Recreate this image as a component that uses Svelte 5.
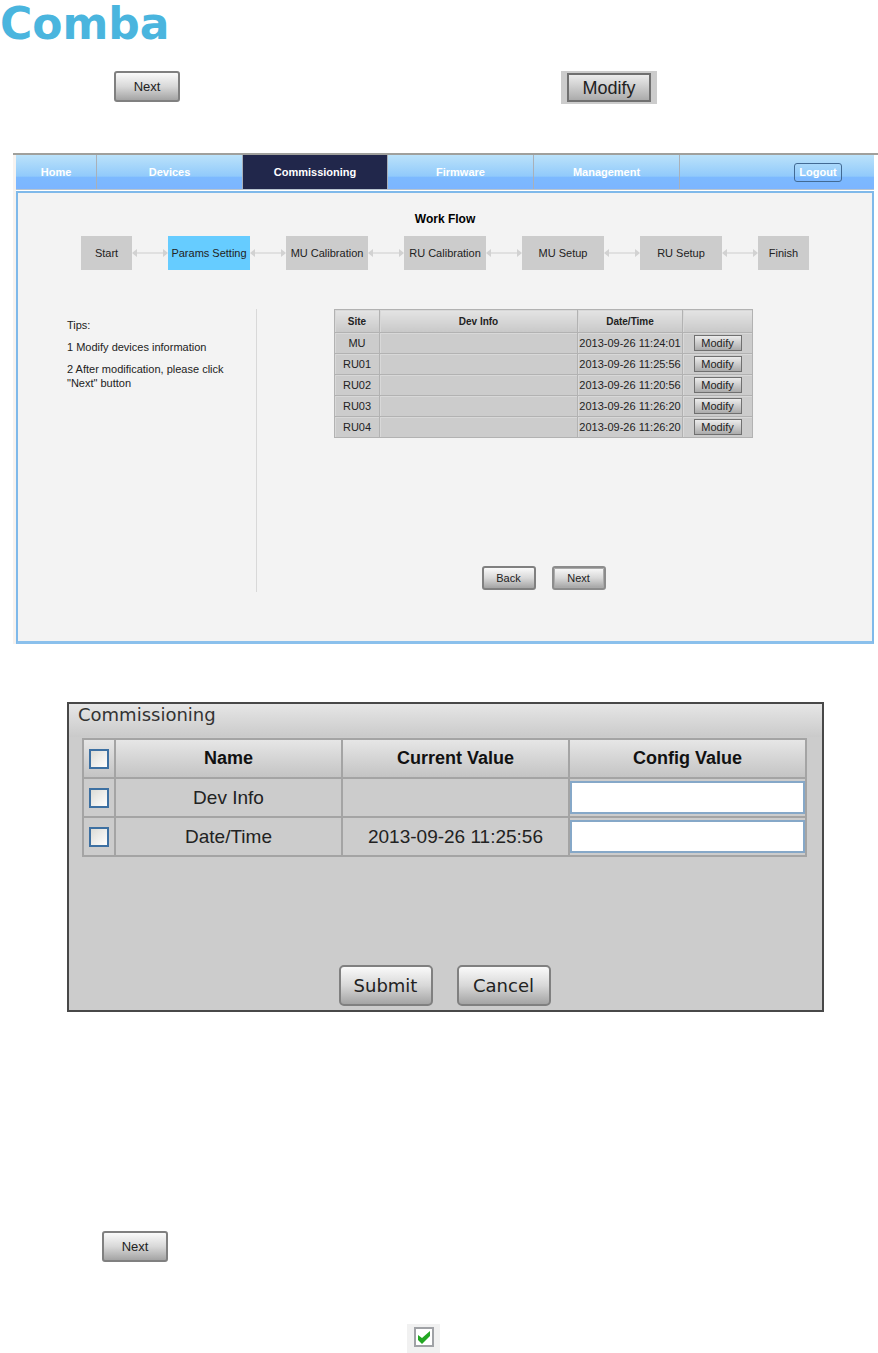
<script lang="ts">
  type Device = { site: string; info: string; time: string };
  type Param = { name: string; current: string; checked: boolean; config: string };

  const tabs = ['Home', 'Devices', 'Commissioning', 'Firmware', 'Management'];
  let activeTab = $state('Commissioning');

  const steps = [
    { label: 'Start', small: true },
    { label: 'Params Setting' },
    { label: 'MU Calibration' },
    { label: 'RU Calibration' },
    { label: 'MU Setup' },
    { label: 'RU Setup' },
    { label: 'Finish', small: true },
  ];
  let activeStep = $state(1);

  const devices: Device[] = [
    { site: 'MU', info: '', time: '2013-09-26 11:24:01' },
    { site: 'RU01', info: '', time: '2013-09-26 11:25:56' },
    { site: 'RU02', info: '', time: '2013-09-26 11:20:56' },
    { site: 'RU03', info: '', time: '2013-09-26 11:26:20' },
    { site: 'RU04', info: '', time: '2013-09-26 11:26:20' },
  ];

  let params: Param[] = $state([
    { name: 'Dev Info', current: '', checked: false, config: '' },
    { name: 'Date/Time', current: '2013-09-26 11:25:56', checked: false, config: '' },
  ]);
  let confirmed = $state(true);

  function toggleAll(e: Event) {
    const on = (e.currentTarget as HTMLInputElement).checked;
    params.forEach((p) => (p.checked = on));
  }

  function move(delta: number) {
    activeStep = Math.min(steps.length - 1, Math.max(0, activeStep + delta));
  }
</script>

<div class="page">
  <header class="logo">Comba</header>

  <div class="samples">
    <button class="btn sample-next" onclick={() => move(1)}>Next</button>
    <span class="modify-wrap"><button class="modify large">Modify</button></span>
  </div>

  <section class="app">
    <nav>
      {#each tabs as tab}
        <a href="#{tab.toLowerCase()}" class:active={tab === activeTab} onclick={() => (activeTab = tab)}>{tab}</a>
      {/each}
      <div class="nav-end"><button class="logout">Logout</button></div>
    </nav>

    <main>
      <h2>Work Flow</h2>
      <div class="flow">
        {#each steps as step, i}
          {#if i > 0}
            <svg class="arrow" viewBox="0 0 36 8" aria-hidden="true">
              <path d="M4 4H32" stroke="#dadada" stroke-width="1.5" />
              <path d="M0 4L5 0V8ZM36 4L31 0V8Z" fill="#d2d2d2" />
            </svg>
          {/if}
          <div class="step" class:small={step.small} class:current={i === activeStep}>{step.label}</div>
        {/each}
      </div>

      <div class="body">
        <aside>
          <p>Tips:</p>
          <p>1 Modify devices information</p>
          <p>2 After modification, please click "Next" button</p>
        </aside>
        <div class="work">
          <table class="devices">
            <colgroup><col class="c-site" /><col /><col class="c-time" /><col class="c-act" /></colgroup>
            <thead>
              <tr><th>Site</th><th>Dev Info</th><th>Date/Time</th><th></th></tr>
            </thead>
            <tbody>
              {#each devices as d}
                <tr>
                  <td>{d.site}</td>
                  <td>{d.info}</td>
                  <td>{d.time}</td>
                  <td><button class="modify">Modify</button></td>
                </tr>
              {/each}
            </tbody>
          </table>
          <div class="actions">
            <button class="btn" onclick={() => move(-1)}>Back</button>
            <button class="btn focused" onclick={() => move(1)}>Next</button>
          </div>
        </div>
      </div>
    </main>
  </section>

  <section class="dialog">
    <h3>Commissioning</h3>
    <div class="dialog-body">
      <table class="params">
        <colgroup><col class="c-check" /><col class="c-name" /><col class="c-name" /><col /></colgroup>
        <thead>
          <tr>
            <th><input type="checkbox" aria-label="Select all" onchange={toggleAll} /></th>
            <th>Name</th>
            <th>Current Value</th>
            <th>Config Value</th>
          </tr>
        </thead>
        <tbody>
          {#each params as p}
            <tr>
              <td><input type="checkbox" aria-label="Select {p.name}" bind:checked={p.checked} /></td>
              <td>{p.name}</td>
              <td>{p.current}</td>
              <td class="config"><input type="text" aria-label="{p.name} config value" bind:value={p.config} /></td>
            </tr>
          {/each}
        </tbody>
      </table>
      <div class="dialog-actions">
        <button class="btn big">Submit</button>
        <button class="btn big">Cancel</button>
      </div>
    </div>
  </section>

  <div class="next-row"><button class="btn sample-next" onclick={() => move(1)}>Next</button></div>

  <div class="check-row">
    <label class="tick">
      <input type="checkbox" aria-label="Confirmed" bind:checked={confirmed} />
      {#if confirmed}
        <svg viewBox="0 0 20 20" aria-hidden="true">
          <path d="M4 8L8 11L16 4V9L8 17L4 13Z" fill="#22a722" />
        </svg>
      {/if}
    </label>
  </div>
</div>

<style>
  :global(body) {
    margin: 0;
    background: #fff;
  }

  .page {
    font-family: 'Liberation Sans', Arial, sans-serif;
    font-size: 11px;
    color: #222;
  }

  .page * {
    box-sizing: border-box;
  }

  button {
    font-family: inherit;
    color: #222;
    cursor: pointer;
  }

  .logo {
    height: 71px;
    font-family: 'DejaVu Sans', Verdana, sans-serif;
    font-size: 44px;
    font-weight: bold;
    line-height: 48px;
    color: #4ab5de;
  }

  /* Buttons */
  .btn {
    width: 54px;
    height: 24px;
    padding: 0;
    border: 2px solid #808080;
    border-radius: 3px;
    background: linear-gradient(#fafafa, #d8d8d8 50%, #a4a4a4);
    font-size: 11px;
  }

  .btn.focused {
    border-color: #8c8c8c;
    box-shadow: inset 0 0 0 1px #aaa;
  }

  .btn.sample-next {
    width: 66px;
    height: 31px;
    font-size: 13px;
  }

  .btn.big {
    width: 94px;
    height: 41px;
    border-radius: 5px;
    font-family: 'DejaVu Sans', Verdana, sans-serif;
    font-size: 18px;
  }

  .modify {
    display: block;
    width: 48px;
    height: 16px;
    margin: 0 auto;
    padding: 0;
    border: 1px solid #707070;
    background: linear-gradient(#ececec, #ababab);
    font-size: 11px;
    line-height: 12px;
  }

  .modify.large {
    width: 84px;
    height: 29px;
    border-width: 2px;
    font-size: 18px;
    line-height: 24px;
  }

  .samples {
    display: flex;
    gap: 381px;
    height: 82px;
    padding-left: 114px;
    align-items: flex-start;
  }

  .modify-wrap {
    display: flex;
    width: 96px;
    height: 33px;
    align-items: center;
    background: #ccc;
  }

  /* Main window */
  .app {
    margin-left: 13px;
    padding: 0 4px 0 3px;
    border-top: 2px solid #a0a09c;
    background: linear-gradient(90deg, #f7f3f0 3px, #fff 3px);
  }

  nav {
    display: grid;
    grid-template-columns: 81fr 146fr 145fr 146fr 146fr 194fr;
    height: 35px;
    border-bottom: 1px solid #b8c4d0;
    background: linear-gradient(#bbe2fa, #91cafb 62%, #7cb9ff 66%, #7cb5ff);
  }

  nav a {
    display: flex;
    align-items: center;
    justify-content: center;
    border-right: 1px solid #a9b0b8;
    color: #fff;
    font-weight: bold;
    text-decoration: none;
  }

  nav a.active {
    background: #21274b;
  }

  .nav-end {
    display: flex;
    align-items: center;
    justify-content: flex-end;
    padding-right: 32px;
  }

  .logout {
    width: 48px;
    height: 19px;
    padding: 0;
    border: 1px solid #426a94;
    border-radius: 3px;
    background: transparent;
    color: #fff;
    font-size: 11px;
    font-weight: bold;
  }

  main {
    margin-top: 1px;
    min-height: 453px;
    padding-top: 19px;
    border: 2px solid #7fb9ea;
    border-bottom: 3px solid #8bc0ec;
    background: #f3f3f3;
  }

  h2 {
    margin: 0 0 10px;
    font-size: 12px;
    line-height: 14px;
    text-align: center;
    color: #000;
  }

  .flow {
    display: flex;
    justify-content: center;
    align-items: center;
  }

  .step {
    width: 82px;
    background: #ccc;
    line-height: 34px;
    text-align: center;
    white-space: nowrap;
  }

  .step.small {
    width: 51px;
  }

  .step.current {
    background: #66ccff;
  }

  .arrow {
    width: 36px;
    height: 8px;
  }

  .body {
    display: flex;
    margin: 39px 119px 0 49px;
  }

  aside {
    width: 190px;
    min-height: 283px;
    padding: 9px 20px 0 0;
    border-right: 1px solid #d8d8d8;
    line-height: 14px;
  }

  aside p {
    margin: 0 0 8px;
  }

  .work {
    flex: 1;
    padding-left: 77px;
  }

  table {
    width: 100%;
    table-layout: fixed;
    border-collapse: collapse;
    text-align: center;
  }

  th,
  td {
    padding: 0;
    white-space: nowrap;
  }

  .devices th,
  .devices td {
    border: 1px solid #b2b2b2;
    background: #ccc;
    box-shadow: inset 1px 1px #d8d8d8;
  }

  .devices th {
    height: 23px;
    background: linear-gradient(#e4e4e4, #c8c8c8);
    font-size: 10px;
  }

  .devices td {
    height: 21px;
  }

  .c-site {
    width: 45px;
  }

  .c-time {
    width: 105px;
  }

  .c-act {
    width: 70px;
  }

  .actions {
    display: flex;
    justify-content: center;
    gap: 16px;
    margin-top: 128px;
  }

  /* Dialog */
  .dialog {
    margin: 58px 54px 0 67px;
    border: 2px solid #484848;
    background: linear-gradient(#e6e6e6, #cacaca 33px, #ccc 33px);
  }

  .dialog-body {
    padding: 0 15px 4px 13px;
  }

  h3 {
    margin: 0;
    height: 34px;
    padding-left: 9px;
    color: #333;
    font-family: 'DejaVu Sans', Verdana, sans-serif;
    font-size: 18px;
    font-weight: normal;
    line-height: 22px;
  }

  .params {
    font-size: 19px;
  }

  .params th,
  .params td {
    height: 39px;
    border: 2px solid #a4a4a4;
  }

  .params th {
    background: linear-gradient(#e6e6e6, #c4c4c4);
    color: #111;
    font-size: 18px;
  }

  .c-check {
    width: 32px;
  }

  .c-name {
    width: 227px;
  }

  input[type='checkbox'] {
    appearance: none;
    display: block;
    width: 20px;
    height: 20px;
    margin: 0 auto;
    border: 2px solid #3d70a2;
    background: linear-gradient(135deg, #dcdcd6, #fff);
  }

  .params input[type='checkbox']:checked {
    background: #21a121;
    box-shadow: inset 0 0 0 3px #fff;
  }

  .config input {
    display: block;
    width: 100%;
    height: 33px;
    padding: 0 6px;
    border: 2px solid #86a8c8;
    background: #fff;
    font: inherit;
  }

  .dialog-actions {
    display: flex;
    justify-content: center;
    gap: 24px;
    margin-top: 108px;
  }

  .next-row {
    margin-top: 219px;
    padding-left: 102px;
  }

  .check-row {
    display: flex;
    justify-content: center;
    margin-top: 62px;
    padding-right: 31px;
  }

  .tick {
    display: grid;
    width: 33px;
    height: 29px;
    padding-bottom: 4px;
    place-items: center;
    background: #f1f1f1;
  }

  .tick input,
  .tick svg {
    grid-area: 1 / 1;
  }

  .tick input[type='checkbox'] {
    border-color: #a0a2a6;
    background: #fff;
  }

  .tick svg {
    width: 20px;
    height: 20px;
    pointer-events: none;
  }
</style>
